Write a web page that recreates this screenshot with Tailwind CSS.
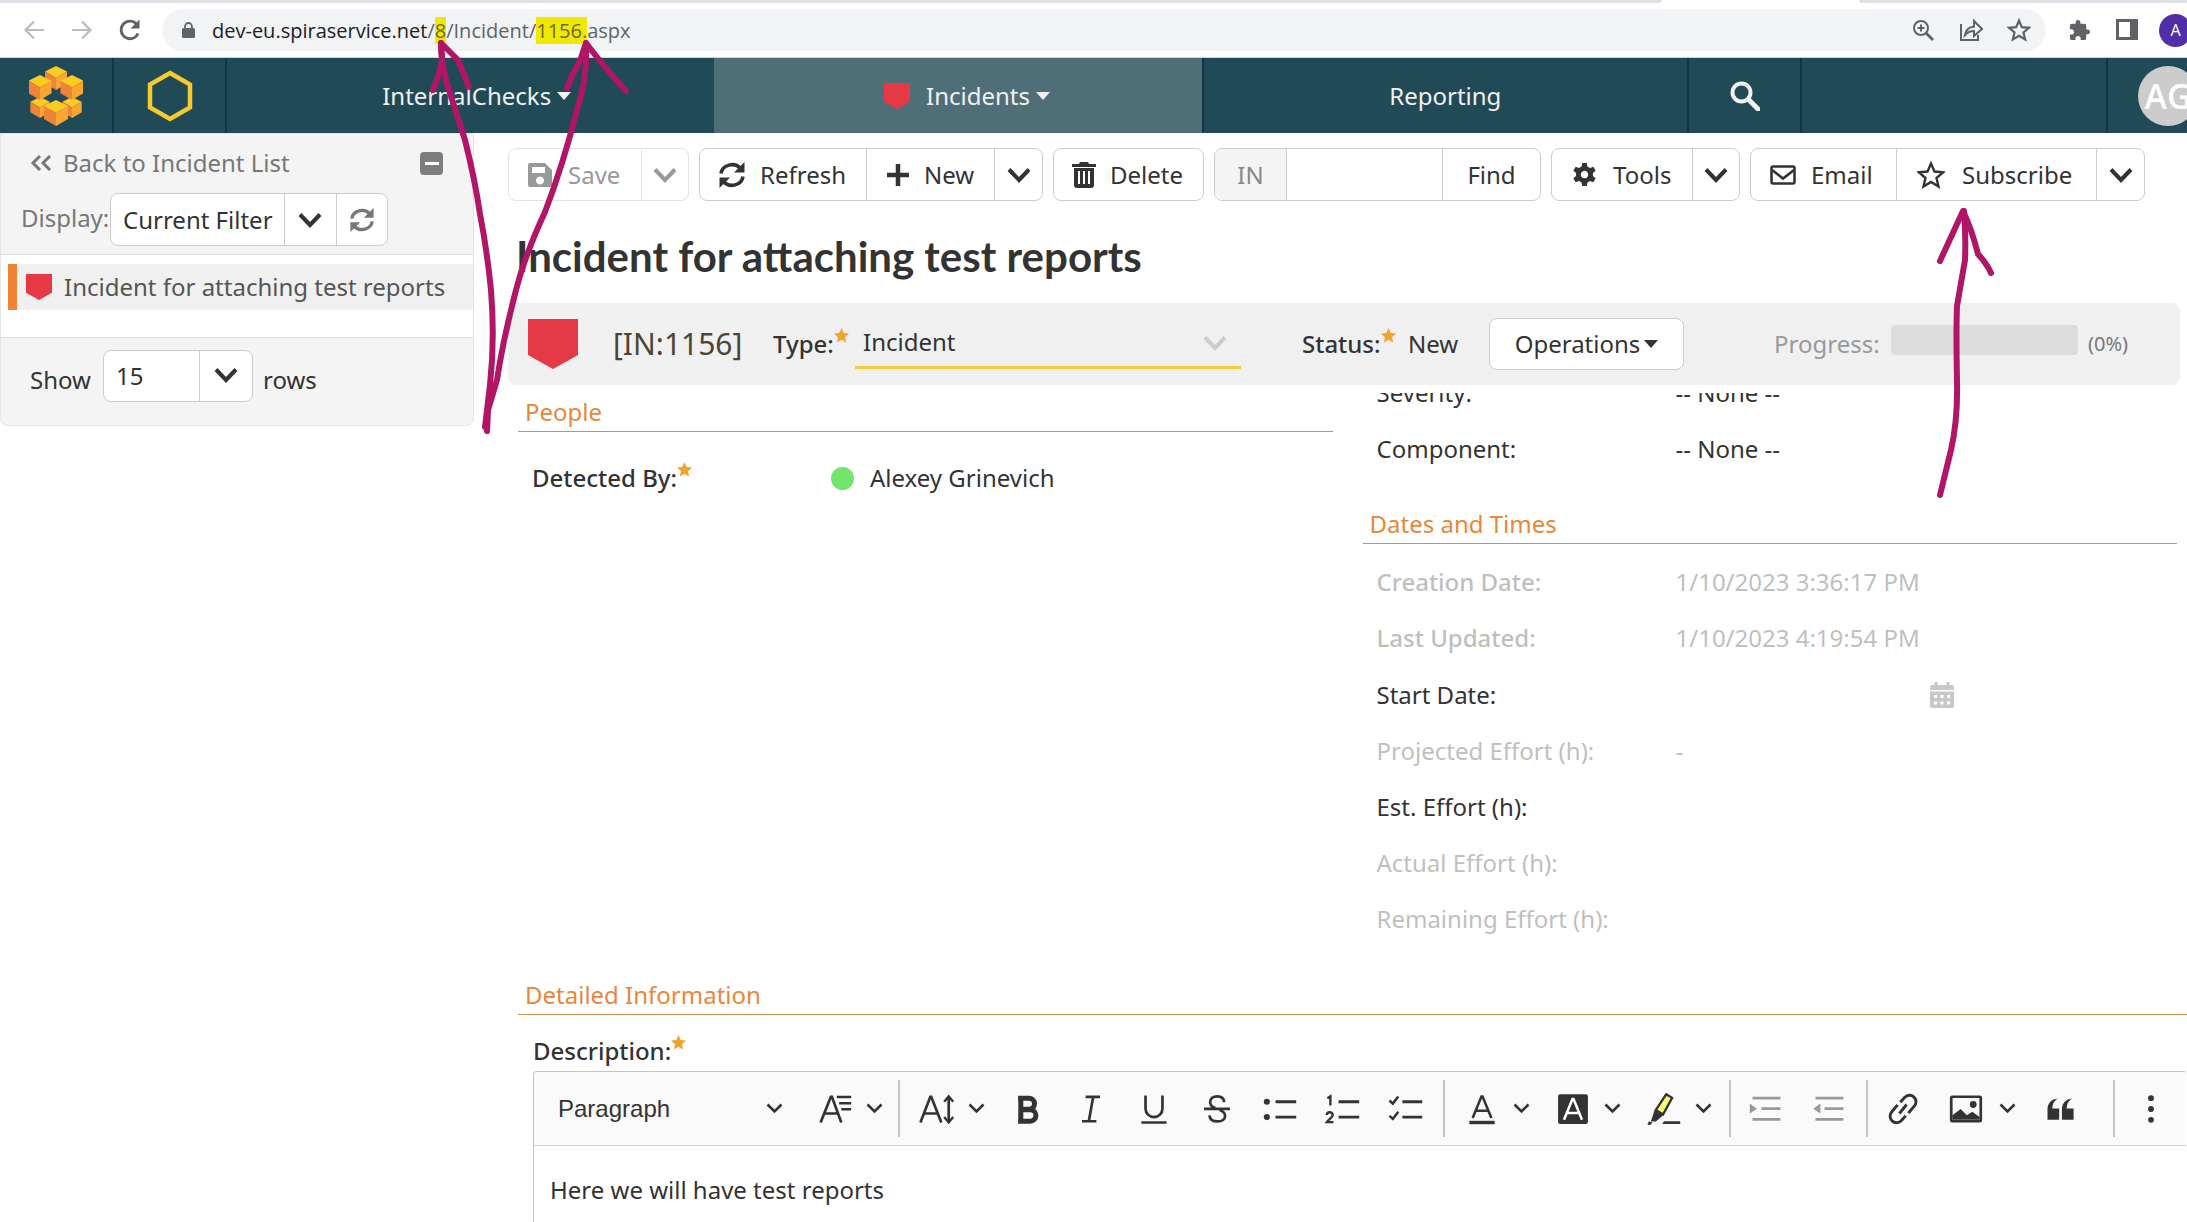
<!DOCTYPE html>
<html lang="en">
<head>
<meta charset="utf-8">
<title>Incident for attaching test reports</title>
<script src="https://cdn.jsdelivr.net/npm/@tailwindcss/browser@4"></script>
</head>
<body class="relative flex h-screen flex-col overflow-hidden bg-white font-['Noto_Sans',sans-serif] text-2xl leading-8 text-[#333]">

<svg class="hidden" xmlns="http://www.w3.org/2000/svg">
  <symbol id="chev" viewBox="0 0 24 16"><path d="M2 2.500 12 13 22 2.500" fill="none" stroke="currentColor" stroke-width="4"/></symbol>
  <symbol id="chev-s" viewBox="0 0 17 11"><path d="M1.500 1.500 8.500 8.500 15.500 1.500" fill="none" stroke="currentColor" stroke-width="2.600"/></symbol>
  <symbol id="caret" viewBox="0 0 14 8"><path d="M0 0h14L7 8z" fill="currentColor"/></symbol>
  <symbol id="incident" viewBox="0 0 50 50"><path d="M0 0h50v36L25 50 0 36z" fill="#e63946"/></symbol>
  <symbol id="star" viewBox="0 0 24 24"><path d="M12 0l3.500 7.800 8.500 1-6.300 5.800L19.400 23 12 18.800 4.600 23l1.700-8.400L0 8.800l8.500-1z" fill="#f0a42b"/></symbol>
  <symbol id="refresh" viewBox="0 0 28 28"><g fill="none" stroke="currentColor" stroke-width="3.600"><path d="M3 12.500A11 10 0 0 1 22.500 7.500"/><path d="M25 15.500A11 10 0 0 1 5.500 20.500"/></g><path d="M26.500 1v10.500H16zM1.500 27V16.500H12z" fill="currentColor"/></symbol>
  <symbol id="cube" viewBox="0 0 24 26"><path d="M12 0 24 6 12 13 0 6z" fill="#fccb22"/><path d="M0 6l12 7v13L0 19z" fill="#f08436"/><path d="M24 6l-12 7v13l12-7z" fill="#f8a832"/></symbol>
</svg>

<!-- browser bar -->
<div class="flex h-[3px] shrink-0 justify-between">
  <div class="w-[76%] rounded-br-lg bg-[#dee1e6]"></div>
  <div class="w-[15%] rounded-bl-lg bg-[#dee1e6]"></div>
</div>
<div class="flex h-[55px] shrink-0 items-center border-b border-[#cfd6da] bg-white pl-[22px] text-[#5f6368]">
  <button aria-label="Back" class="mr-6 text-[#b9bbbe]"><svg class="size-6" viewBox="0 0 24 24"><path d="M22 12H4M12 3.500 3.500 12l8.500 8.500" fill="none" stroke="currentColor" stroke-width="2.200"/></svg></button>
  <button aria-label="Forward" class="mr-6 text-[#b9bbbe]"><svg class="size-6" viewBox="0 0 24 24"><path d="M2 12h18M12 3.500l8.500 8.500-8.500 8.500" fill="none" stroke="currentColor" stroke-width="2.200"/></svg></button>
  <button aria-label="Reload" class="mr-5"><svg class="size-6" viewBox="0 0 24 24"><path d="M20 15.500A8.800 8.800 0 1 1 18.500 6" fill="none" stroke="currentColor" stroke-width="2.800"/><path d="M21.500 1.500v9h-9z" fill="currentColor"/></svg></button>
  <div class="flex h-[42px] min-w-0 flex-1 items-center rounded-full bg-[#f1f3f4] pr-[15px] pl-5">
    <svg class="mr-[17px] h-4 w-[13px]" viewBox="0 0 13 16"><rect y="6" width="13" height="10" rx="1.500" fill="currentColor"/><path d="M3 7V4.500a3.500 3.500 0 0 1 7 0V7" fill="none" stroke="currentColor" stroke-width="1.800"/></svg>
    <div role="textbox" aria-label="Address" class="flex-1 pt-0.5 font-['Open_Sans','Noto_Sans',sans-serif] text-xl whitespace-nowrap"><span class="text-[#202124]">dev-eu.spiraservice.net</span>/<mark class="bg-[#f0e800] text-[#6b6a2a]">8</mark>/Incident/<mark class="bg-[#f0e800] text-[#6b6a2a]">1156.</mark>aspx</div>
    <button aria-label="Zoom" class="mr-[25px]"><svg class="size-[22px]" viewBox="0 0 22 22" fill="none" stroke="currentColor" stroke-width="2"><circle cx="9" cy="9" r="7"/><path d="M14 14l7 7" stroke-width="2.800"/><path d="M9 5.500v7M5.500 9h7"/></svg></button>
    <button aria-label="Share" class="mr-6"><svg class="size-6" viewBox="0 0 24 24" fill="none" stroke="currentColor" stroke-width="2"><path d="M2 6v16h17v-5"/><path d="M6 17c1-6 4-8 9-8.500V3l8 8-8 7v-5c-4 0-6.500 1-9 4z"/></svg></button>
    <button aria-label="Bookmark"><svg class="size-6" viewBox="0 0 24 24" fill="none" stroke="currentColor" stroke-width="2.200"><path d="M12 2.500l2.800 6.700 7.200.6-5.500 4.700 1.700 7L12 17.700 5.800 21.500l1.700-7L2 9.800l7.200-.6z"/></svg></button>
  </div>
  <button aria-label="Extensions" class="ml-[22px]"><svg class="size-[23px]" viewBox="0 0 24 24"><path d="M20.500 11H19V7a2 2 0 0 0-2-2h-4V3.500a2.500 2.500 0 0 0-5 0V5H4a2 2 0 0 0-2 2v3.800h1.500a2.700 2.700 0 0 1 0 5.400H2V20a2 2 0 0 0 2 2h3.800v-1.500a2.700 2.700 0 0 1 5.400 0V22H17a2 2 0 0 0 2-2v-4h1.500a2.500 2.500 0 0 0 0-5z" fill="currentColor"/></svg></button>
  <button aria-label="Side panel" class="ml-[25px]"><svg class="size-[22px]" viewBox="0 0 22 22"><path d="M0 0h22v21H0zM3 3v15h11V3z" fill="currentColor" fill-rule="evenodd"/></svg></button>
  <button aria-label="Profile" class="-mr-[5px] ml-[21px] size-[33px] shrink-0 rounded-full bg-[#512da8] text-center text-base text-white">A</button>
</div>

<!-- global navigation -->
<nav class="flex h-[75px] shrink-0 bg-[#204a56] text-[#f1f1f1]">
  <a href="#" aria-label="Home" class="flex w-[114px] items-center justify-center border-r-2 border-[#0e3844]">
    <svg class="h-[60px] w-[54px]" viewBox="0 0 54 60">
      <use href="#cube" x="0" y="31" width="22" height="21"/><use href="#cube" x="32" y="31" width="22" height="21"/>
      <use href="#cube" x="16" y="0" width="22" height="24"/>
      <use href="#cube" x="-1" y="9" width="24" height="25"/><use href="#cube" x="31" y="9" width="24" height="25"/>
      <use href="#cube" x="15" y="34" width="24" height="26"/>
    </svg>
  </a>
  <a href="#" aria-label="Workspace" class="flex w-[113px] items-center justify-center border-r-2 border-[#0e3844]">
    <svg class="h-[54px] w-[46px]" viewBox="0 0 46 54"><path d="M23 4 43 15.500v23L23 50 3 38.500v-23z" fill="none" stroke="#f6c92c" stroke-width="4.500"/></svg>
  </a>
  <div class="grid flex-1 grid-cols-3">
    <button class="flex items-center justify-center gap-1.5 pl-3">InternalChecks<svg class="h-2 w-3.5"><use href="#caret"/></svg></button>
    <button class="flex items-center justify-center gap-1.5 bg-[#4f6e77] pl-[18px]"><svg class="mr-2.5 h-[26px] w-[26px]"><use href="#incident"/></svg>Incidents<svg class="h-2 w-3.5"><use href="#caret"/></svg></button>
    <a href="#" class="flex items-center justify-center border-r-2 border-l-2 border-[#0e3844]">Reporting</a>
  </div>
  <button aria-label="Search" class="flex w-[113px] items-center justify-center border-r-2 border-[#0e3844]"><svg class="size-[30px]" viewBox="0 0 30 30" fill="none" stroke="currentColor"><circle cx="11.500" cy="11.500" r="9" stroke-width="4"/><path d="M18.500 18.500 28 28" stroke-width="5" stroke-linecap="round"/></svg></button>
  <div class="w-[306px] border-r-2 border-[#0e3844]"></div>
  <div class="flex w-[79px] items-center pl-[30px]"><button class="size-[60px] shrink-0 rounded-full bg-[#ccc] text-center font-['Open_Sans',sans-serif] text-[34px] font-semibold text-white">AG</button></div>
</nav>

<div class="flex min-h-0 flex-1">
  <!-- sidebar -->
  <aside class="h-[293px] w-[474px] shrink-0 rounded-b-lg border border-[#e4e4e4] bg-[#f4f4f4]">
    <div class="h-[121px] border-b border-[#dcdcdc]">
      <div class="flex h-[58px] items-center pr-[30px] pl-[29px] text-[#777]">
        <svg class="mr-[11px] h-4 w-[22px]" viewBox="0 0 22 16" fill="none" stroke="currentColor" stroke-width="3"><path d="M10 1 3 8l7 7M20 1l-7 7 7 7"/></svg>
        <a href="#" class="flex-1">Back to Incident List</a>
        <button aria-label="Collapse" class="flex size-[23px] items-center justify-center rounded bg-[#7d7d7d]"><span class="h-[3px] w-3.5 bg-white"></span></button>
      </div>
      <div class="flex items-center pt-px pl-5 text-[#777]">
        <label for="flt" class="w-[89px] pb-1">Display:</label>
        <div class="relative flex h-[53px] w-[278px] overflow-hidden rounded-lg border border-[#ccc] bg-white text-[#333]">
          <select id="flt" class="flex-1 appearance-none pl-3 outline-none"><option>Current Filter</option></select>
          <svg class="pointer-events-none absolute top-[18px] left-[187px] h-4 w-6"><use href="#chev"/></svg>
          <span class="absolute left-[173px] h-full w-px bg-[#ccc]"></span>
          <button aria-label="Refresh list" class="flex w-[51px] items-center justify-center border-l border-[#ccc] text-[#777]"><svg class="size-[26px]"><use href="#refresh"/></svg></button>
        </div>
      </div>
    </div>
    <div class="h-[82px] bg-white pt-[9px] pl-[7px]">
      <a href="#" class="flex h-[46px] items-center overflow-hidden border-l-[9px] border-[#f08336] bg-[#f0f0f0] pl-[9px] whitespace-nowrap text-[#555]"><svg class="mr-3 size-[26px] shrink-0"><use href="#incident"/></svg>Incident for attaching test reports</a>
    </div>
    <div class="flex h-[88px] items-start border-t border-[#dcdcdc] pt-3 pl-[29px]">
      <label for="rows" class="w-[73px] pt-3.5">Show</label>
      <div class="relative flex h-[52px] w-[150px] rounded-lg border border-[#ccc] bg-white">
        <select id="rows" class="flex-1 appearance-none pl-3 outline-none"><option>15</option></select>
        <span class="absolute left-[95px] h-full w-px bg-[#ccc]"></span>
        <svg class="pointer-events-none absolute top-4 left-[110px] h-4 w-6"><use href="#chev"/></svg>
      </div>
      <span class="pt-3.5 pl-2.5">rows</span>
    </div>
  </aside>

  <!-- incident -->
  <main class="flex min-w-0 flex-1 flex-col pt-[15px]">
    <div class="flex h-[53px] shrink-0 gap-2.5 pl-[34px]">
      <div class="flex rounded-lg border border-[#e2e2e2] text-[#999]">
        <button disabled class="flex w-[132px] items-center pl-[19px]"><svg class="mr-4 size-6" viewBox="0 0 24 24"><path d="M2 0h15l7 7v15a2 2 0 0 1-2 2H2a2 2 0 0 1-2-2V2a2 2 0 0 1 2-2zM4 4v6h13V4zM12 13.500a4 4 0 1 0 .010 0z" fill="currentColor" fill-rule="evenodd"/></svg>Save</button>
        <button disabled aria-label="Save options" class="flex w-[47px] items-center justify-center border-l border-[#e2e2e2]"><svg class="h-4 w-6"><use href="#chev"/></svg></button>
      </div>
      <div class="flex rounded-lg border border-[#ccc]">
        <button class="flex w-[166px] items-center pl-[18px]"><svg class="mr-3.5 size-7"><use href="#refresh"/></svg>Refresh</button>
        <button class="flex w-[128px] items-center border-l border-[#ccc] pl-[19px]"><svg class="mr-3.5 size-6" viewBox="0 0 24 24"><path d="M12 1v22M1 12h22" stroke="currentColor" stroke-width="4.500"/></svg>New</button>
        <button aria-label="New options" class="flex w-[48px] items-center justify-center border-l border-[#ccc]"><svg class="h-4 w-6"><use href="#chev"/></svg></button>
      </div>
      <button class="flex w-[151px] items-center rounded-lg border border-[#ccc] pl-[18px]"><svg class="mr-3.5 h-[26px] w-6" viewBox="0 0 24 26"><path d="M8 0h8l1 2h7v3H0V2h7zM2 6h20v17a3 3 0 0 1-3 3H5a3 3 0 0 1-3-3zM6 9v13h2V9zm5 0v13h2V9zm5 0v13h2V9z" fill="currentColor" fill-rule="evenodd"/></svg>Delete</button>
      <div class="flex overflow-hidden rounded-lg border border-[#ccc]">
        <label for="find" class="flex w-[71px] items-center justify-center bg-[#f4f4f4] text-[#888]">IN</label>
        <input id="find" type="text" class="w-[157px] border-x border-[#ccc] px-3 outline-none">
        <button class="w-[97px]">Find</button>
      </div>
      <div class="flex rounded-lg border border-[#ccc]">
        <button class="flex w-[140px] items-center pl-5"><svg class="mr-4 size-[25px]" viewBox="0 0 24 24"><path d="M9.800 0h4.400l.6 3.300 2.500 1.400 3.200-1.200 2.200 3.800-2.600 2.200v3l2.600 2.200-2.200 3.800-3.200-1.200-2.500 1.400-.6 3.300H9.800l-.6-3.300-2.500-1.400-3.200 1.200-2.200-3.800 2.600-2.200v-3L1.300 7.300l2.200-3.800 3.200 1.200 2.500-1.400zM12 7.500a3.600 3.600 0 1 0 .010 0z" transform="translate(0 1)" fill="currentColor" fill-rule="evenodd"/></svg>Tools</button>
        <button aria-label="Tool options" class="flex w-[47px] items-center justify-center border-l border-[#ccc]"><svg class="h-4 w-6"><use href="#chev"/></svg></button>
      </div>
      <div class="flex rounded-lg border border-[#ccc]">
        <button class="flex w-[145px] items-center pl-[19px]"><svg class="mr-[15px] h-5 w-[26px]" viewBox="0 0 26 20" fill="none" stroke="currentColor" stroke-width="2.600"><rect x="1.500" y="1.500" width="23" height="17" rx="1.500"/><path d="M2 5l11 8.500L24 5"/></svg>Email</button>
        <button class="flex w-[200px] items-center border-l border-[#ccc] pl-5"><svg class="mr-[17px] size-7" viewBox="0 0 28 28"><path d="M14 2.500l3.500 8 8.500.8-6.500 5.700 2 8.500-7.500-4.600-7.500 4.600 2-8.500L2 11.300l8.500-.8z" fill="none" stroke="currentColor" stroke-width="2.400"/></svg>Subscribe</button>
        <button aria-label="Subscribe options" class="flex w-[48px] items-center justify-center border-l border-[#ccc]"><svg class="h-4 w-6"><use href="#chev"/></svg></button>
      </div>
    </div>

    <h1 class="mt-7 h-[74px] shrink-0 pl-[42px] font-['Lato',sans-serif] text-[42px] leading-[54px] font-bold">Incident for attaching test reports</h1>

    <div class="mr-[7px] ml-[34px] flex h-[82px] shrink-0 items-center rounded-lg bg-[#f0f0f0] pl-5 whitespace-nowrap">
      <svg class="mr-[35px] size-[50px] shrink-0"><use href="#incident"/></svg>
      <span class="w-[160px] text-3xl text-[#4d4335]">[IN:1156]</span>
      <label for="type" class="flex w-[82px] font-medium">Type:<svg class="size-[15px]"><use href="#star"/></svg></label>
      <div class="relative w-[386px]">
        <select id="type" class="h-[50px] w-full appearance-none border-b-[3px] border-[#f6cc3e] pb-0.5 pl-2 outline-none"><option>Incident</option></select>
        <svg class="pointer-events-none absolute top-4 right-3.5 h-4 w-6 text-[#ccc]"><use href="#chev"/></svg>
      </div>
      <span class="ml-[61px] flex w-[106px] font-medium">Status:<svg class="size-[15px]"><use href="#star"/></svg></span>
      <span class="w-[81px]">New</span>
      <button class="flex h-[52px] w-[195px] items-center justify-center gap-1 rounded-lg border border-[#ccc] bg-white">Operations<svg class="h-2 w-3.5"><use href="#caret"/></svg></button>
      <span class="ml-auto w-[117px] text-[#999]">Progress:</span>
      <span class="mb-2 h-[30px] w-[187px] rounded bg-[#dcdcdc]"></span>
      <span class="mr-[44px] ml-2.5 w-12 text-xl text-[#777]">(0%)</span>
    </div>

    <div class="mt-2 flex min-h-0 flex-1 flex-col overflow-hidden pl-[44px]">
      <div class="grid shrink-0 grid-cols-2 gap-[30px] pr-2.5">
        <section>
          <h2 class="flex h-[39px] items-end border-b-[1px] border-[#d08f55] pb-[3px] pl-[7px] text-[#e8873a]">People</h2>
          <div class="mt-[18px] flex h-14 items-center pl-3.5">
            <span class="flex w-[299px] font-medium">Detected By:<svg class="size-[15px]"><use href="#star"/></svg></span>
            <span class="mr-4 size-[23px] rounded-full bg-[#72e56c]"></span>Alexey Grinevich
          </div>
        </section>
        <section class="-mt-7">
          <div class="flex h-14 items-center pl-3.5"><span class="w-[299px]">Severity:</span>-- None --</div>
          <div class="flex h-14 items-center pl-3.5"><span class="w-[299px]">Component:</span>-- None --</div>
          <h2 class="mt-7 mb-2.5 flex h-[39px] items-end border-b-[1px] border-[#d08f55] pb-[3px] pl-[7px] text-[#e8873a]">Dates and Times</h2>
          <div class="flex h-14 items-center pl-3.5 text-[#bfbfbf]"><span class="w-[299px] font-medium">Creation Date:</span>1/10/2023 3:36:17 PM</div>
          <div class="flex h-14 items-center pl-3.5 text-[#bfbfbf]"><span class="w-[299px] font-medium">Last Updated:</span>1/10/2023 4:19:54 PM</div>
          <div class="flex h-[57px] items-center pl-3.5"><label for="start" class="w-[299px]">Start Date:</label><input id="start" type="text" class="w-[254px] outline-none"><button aria-label="Pick a date"><svg class="h-[26px] w-6" viewBox="0 0 24 26"><path d="M4.500 0h3v3h9V0h3v3H22a2 2 0 0 1 2 2v3H0V5a2 2 0 0 1 2-2h2.500zM0 9.500h24V24a2 2 0 0 1-2 2H2a2 2 0 0 1-2-2zM4 13v3h3v-3zm6.500 0v3h3v-3zm6.500 0v3h3v-3zM4 19.500v3h3v-3zm6.500 0v3h3v-3zm6.500 0v3h3v-3z" fill="#c8c8c8" fill-rule="evenodd"/></svg></button></div>
          <div class="flex h-14 items-center pl-3.5 text-[#bfbfbf]"><span class="w-[299px]">Projected Effort (h):</span>-</div>
          <div class="flex h-14 items-center pl-3.5"><label for="est" class="w-[299px]">Est. Effort (h):</label><input id="est" type="text" class="w-[254px] outline-none"></div>
          <div class="flex h-14 items-center pl-3.5 text-[#bfbfbf]">Actual Effort (h):</div>
          <div class="flex h-14 items-center pl-3.5 text-[#bfbfbf]">Remaining Effort (h):</div>
        </section>
      </div>

      <h2 class="mt-[29px] flex h-[39px] shrink-0 items-end border-b-[1px] border-[#d08f55] pb-[3px] pl-[7px] text-[#e8873a]">Detailed Information</h2>
      <div class="mt-5 mb-1 ml-[15px] flex shrink-0 font-medium">Description:<svg class="size-[15px]"><use href="#star"/></svg></div>

      <div class="ml-[15px] flex min-h-0 flex-1 flex-col rounded-t border border-b-0 border-[#c4c4c4] border-r-transparent">
        <div class="flex h-[74px] shrink-0 items-center rounded-t border-b border-[#d0d0d0] bg-[#fafafa]">
          <button class="flex w-[267px] items-center justify-between pr-[18px] pl-6 font-['Liberation_Sans',sans-serif]">Paragraph<svg class="h-[11px] w-[17px]"><use href="#chev-s"/></svg></button>
          <button aria-label="Font family" class="flex w-[91px] items-center gap-[13px] pl-4"><svg class="size-9" viewBox="0 0 20 20" fill="none" stroke="currentColor" stroke-width="1.500"><path d="M2 17.500 7.700 3.200h.6L13.500 17.500M4 12.500h7.800"/><path d="M11 3.300h8M12.300 6.800H19M13.500 10.200H19" stroke-width="1.400"/></svg><svg class="h-[11px] w-[17px]"><use href="#chev-s"/></svg></button>
          <span class="mr-[3px] ml-1.5 h-[57px] w-[2px] bg-[#c4c4c4]"></span>
          <button aria-label="Font size" class="flex w-[91px] items-center gap-[13px] pl-4"><svg class="size-9" viewBox="0 0 20 20" fill="none" stroke="currentColor" stroke-width="1.500"><path d="M.8 17.500 6.300 3.200h.5L12.400 17.500M2.800 12.500h7.700"/><path d="M16.500 3.500v13.500" /><path d="M14 6l2.500-3L19 6M14 14.500l2.500 3 2.500-3" stroke-width="1.300"/></svg><svg class="h-[11px] w-[17px]"><use href="#chev-s"/></svg></button>
          <button aria-label="Bold" class="ml-0.5 flex w-[63px] justify-center"><svg class="size-9" viewBox="0 0 20 20"><path d="M4.500 4H10.500a3 3 0 0 1 0 6.200H6M6 10.400h5.200a3.200 3.200 0 0 1 0 6.400H4.500M6 4v13" fill="none" stroke="currentColor" stroke-width="2.800"/></svg></button>
          <button aria-label="Italic" class="flex w-[63px] justify-center"><svg class="size-9" viewBox="0 0 20 20"><path d="M7 3.300h8M5 16.800h8M11.200 3.300 8.800 16.800" fill="none" stroke="currentColor" stroke-width="1.500"/></svg></button>
          <button aria-label="Underline" class="flex w-[63px] justify-center"><svg class="size-9" viewBox="0 0 20 20"><path d="M5.300 2.500v7.300a4.700 4.700 0 0 0 9.400 0V2.500M3 17.500h14" fill="none" stroke="currentColor" stroke-width="1.500"/></svg></button>
          <button aria-label="Strikethrough" class="flex w-[63px] justify-center"><svg class="size-9" viewBox="0 0 20 20"><path d="M14 6.200C13.800 4 12.300 3 10.200 3 7.800 3 6.200 4.200 6.200 6.200 6.200 8 7.300 8.800 9 9.500M11.500 10.500c2 .8 3 1.600 3 3.200 0 2-1.700 3.200-4.200 3.200-2.500 0-4.300-1.200-4.500-3.400M2.800 9.900h14.400" fill="none" stroke="currentColor" stroke-width="1.500"/></svg></button>
          <button aria-label="Bulleted list" class="flex w-[63px] justify-center"><svg class="size-9" viewBox="0 0 20 20"><circle cx="2.700" cy="6" r="1.700" fill="currentColor"/><circle cx="2.700" cy="14.500" r="1.700" fill="currentColor"/><path d="M7.500 6H19M7.500 14.500H19" stroke="currentColor" stroke-width="1.600"/></svg></button>
          <button aria-label="Numbered list" class="flex w-[63px] justify-center"><svg class="size-9" viewBox="0 0 20 20" fill="none" stroke="currentColor"><path d="M7.500 6H19M7.500 14.500H19" stroke-width="1.600"/><path d="M1.300 4 3 3v5M1 13.300c0-2 3.300-2 3.300 0 0 1.200-1.800 2-3.300 4h3.700" stroke-width="1.300"/></svg></button>
          <button aria-label="To-do list" class="flex w-[63px] justify-center"><svg class="size-9" viewBox="0 0 20 20" fill="none" stroke="currentColor"><path d="M8 6h11M8 14.500h11" stroke-width="1.600"/><path d="M.8 5.300 2.700 7l3-4M.8 13.800l1.900 1.700 3-4" stroke-width="1.400"/></svg></button>
          <span class="mr-[3px] ml-1.5 h-[57px] w-[2px] bg-[#c4c4c4]"></span>
          <button aria-label="Font color" class="flex w-[91px] items-center gap-[13px] pl-4"><svg class="size-9" viewBox="0 0 20 20" fill="none" stroke="currentColor" stroke-width="1.400"><path d="M4.800 15 9.700 3h.6l4.900 12M6.500 11h7"/><path d="M3 17.500h14" stroke-width="1.900"/></svg><svg class="h-[11px] w-[17px]"><use href="#chev-s"/></svg></button>
          <button aria-label="Font background" class="flex w-[91px] items-center gap-[13px] pl-4"><svg class="size-9" viewBox="0 0 20 20"><rect x="1.700" y="1.800" width="16.600" height="16.600" rx="1.200" fill="currentColor"/><path d="M5 16 9.700 4.500h.6L15 16M6.800 12.200h6.500" fill="none" stroke="#fff" stroke-width="1.400"/></svg><svg class="h-[11px] w-[17px]"><use href="#chev-s"/></svg></button>
          <button aria-label="Highlight" class="flex w-[91px] items-center gap-[13px] pl-4"><svg class="size-9" viewBox="0 0 20 20"><path d="M11.200 1.800 14.500 3.800 9.500 13 5.500 10.500z" fill="#fdfd77" stroke="currentColor" stroke-width="1.300"/><path d="M4.800 10.500 9.700 13.400 5.500 17H2.700zM1.500 17l2 .3-.8 1.500H.8zM10 16.800h9v1.500H9z" fill="currentColor"/></svg><svg class="h-[11px] w-[17px]"><use href="#chev-s"/></svg></button>
          <span class="mr-[3px] ml-2 h-[57px] w-[2px] bg-[#c4c4c4]"></span>
          <button disabled aria-label="Increase indent" class="flex w-[63px] justify-center text-[#999]"><svg class="size-9" viewBox="0 0 20 20"><path d="M2.500 4H18M7.500 9.800H18M2.500 15.800H18" stroke="currentColor" stroke-width="1.500"/><path d="M1 7v5.500l4-2.700z" fill="currentColor"/></svg></button>
          <button disabled aria-label="Decrease indent" class="flex w-[63px] justify-center text-[#999]"><svg class="size-9" viewBox="0 0 20 20"><path d="M2.500 4H18M7.500 9.800H18M2.500 15.800H18" stroke="currentColor" stroke-width="1.500"/><path d="M5.200 7v5.500l-4-2.700z" fill="currentColor"/></svg></button>
          <span class="mr-[3px] ml-1.5 h-[57px] w-[2px] bg-[#c4c4c4]"></span>
          <button aria-label="Link" class="flex w-[63px] justify-center"><svg class="size-9" viewBox="0 0 20 20" fill="none" stroke="currentColor" stroke-width="1.600"><path d="M8.500 6.200 11 3.500a3.600 3.600 0 0 1 5.200 5L13 12.300M11.500 13.800 9 16.500a3.600 3.600 0 0 1-5.200-5L7 7.700M8 12.500l4-5"/></svg></button>
          <button aria-label="Image" class="flex w-[91px] items-center gap-[15px] pl-3.5"><svg class="size-9" viewBox="0 0 20 20"><rect x="1.800" y="3.200" width="16.400" height="13.600" rx=".6" fill="none" stroke="currentColor" stroke-width="1.500"/><path d="M2.500 16v-2.500L7 10l3.500 3.500 3-2 4 3V16z" fill="currentColor"/><circle cx="14" cy="7.500" r="1.900" fill="currentColor"/></svg><svg class="h-[11px] w-[17px]"><use href="#chev-s"/></svg></button>
          <button aria-label="Block quote" class="ml-1 flex w-[63px] justify-center"><svg class="size-9" viewBox="0 0 20 20"><path id="q" d="M2.500 10.500c0-3.500 1.800-6 6-6.300C6.300 5.200 5.300 7 5.200 9.700H9V16H2.500z" fill="currentColor"/><use href="#q" x="8"/></svg></button>
          <span class="ml-auto h-[57px] w-[2px] bg-[#c4c4c4]"></span>
          <button aria-label="More" class="flex w-[71px] justify-center"><svg class="size-9" viewBox="0 0 20 20" fill="currentColor"><circle cx="10" cy="4" r="1.600"/><circle cx="10" cy="10" r="1.600"/><circle cx="10" cy="16" r="1.600"/></svg></button>
        </div>
        <div role="textbox" aria-label="Description" class="flex-1 px-4 pt-7">Here we will have test reports</div>
      </div>
    </div>
  </main>
</div>

<!-- hand-drawn pointers over the page -->
<svg class="pointer-events-none absolute top-0 left-0 h-[520px] w-[2187px]" viewBox="0 0 2187 520" fill="none" stroke="#b01566" stroke-width="6" stroke-linecap="round" stroke-linejoin="round">
  <path d="M441 43Q441 60 447 84L465 140Q475 180 480 214Q487 250 491 290Q495 340 490 385L485 427"/>
  <path d="M433 90Q440 74 442 60L441 43 458 60Q463 72 469 87"/>
  <path d="M586 43Q588 75 577 110Q563 165 545 212Q525 255 516 290Q503 340 497 380L488 410 487 431"/>
  <path d="M567 88Q572 74 580 61L586 43Q600 62 626 91"/>
  <path d="M1964 211Q1966 235 1965 260L1957 306Q1956 330 1957 380Q1958 420 1951 450L1940 495"/>
  <path d="M1940 261 1963 211Q1972 230 1978 254Q1987 264 1991 273"/>
</svg>
</body>
</html>
